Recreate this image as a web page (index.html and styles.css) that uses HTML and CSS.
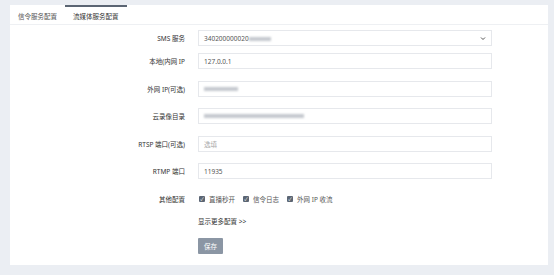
FILE: index.html
```html
<!DOCTYPE html>
<html lang="zh">
<head>
    <meta charset="UTF-8">
    <title>流媒体服务配置</title>
    <link rel="stylesheet" href="styles.css">
</head>
<body>
    <div class="card">
        <div class="tabs">
            <div class="tab">信令服务配置</div>
            <div class="tab active">流媒体服务配置</div>
        </div>
        <div class="form">
            <div class="row first">
                <label class="label">SMS 服务</label>
                <div class="control select">
                    <span>340200000020<span class="blur short"></span></span>
                    <svg class="arrow" width="6" height="5" viewBox="0 0 6 5"><path d="M1 1.5 L3 3.5 L5 1.5" fill="none" stroke="#555" stroke-width="1"/></svg>
                </div>
            </div>
            <div class="row second">
                <label class="label">本地(内网 IP</label>
                <div class="control">127.0.0.1</div>
            </div>
            <div class="row">
                <label class="label">外网 IP(可选)</label>
                <div class="control"><span class="blur mid"></span></div>
            </div>
            <div class="row">
                <label class="label">云录像目录</label>
                <div class="control"><span class="blur long"></span></div>
            </div>
            <div class="row">
                <label class="label">RTSP 端口(可选)</label>
                <div class="control placeholder">选填</div>
            </div>
            <div class="row">
                <label class="label">RTMP 端口</label>
                <div class="control">11935</div>
            </div>
            <div class="row">
                <label class="label">其他配置</label>
                <div class="checks">
                    <span class="check"><span class="box">✓</span>直播秒开</span>
                    <span class="check"><span class="box">✓</span>信令日志</span>
                    <span class="check"><span class="box">✓</span>外网 IP 收流</span>
                </div>
            </div>
            <div class="row more">
                <span class="label"></span>
                <a class="more-link">显示更多配置 &gt;&gt;</a>
            </div>
            <div class="row last">
                <span class="label"></span>
                <button class="save">保存</button>
            </div>
        </div>
    </div>
</body>
</html>
```

FILE: styles.css
```css
/* Página */
body {
    margin: 0;
    background-color: #ebeef3;
    font-family: "Noto Sans", "Noto Sans CJK SC", sans-serif;
    font-size: 6.5px;
    color: #333;
}

.card {
    margin: 5px 6px 0 10px;
    height: 260px;
    background-color: white;
}

/* Pestañas */
.tabs {
    display: flex;
    height: 20px;
    border-bottom: 1px solid #eef0f3;
    box-sizing: border-box;
}

.tab {
    display: flex;
    align-items: center;
    padding: 0 8px;
    color: #555;
    border-top: 2px solid transparent;
    box-sizing: border-box;
}

.tab.active {
    border-top-color: #5b6573;
    color: #333;
}

/* Formulario */
.row {
    display: flex;
    align-items: center;
    height: 16px;
    margin-top: 11.5px;
}

.row.first {
    margin-top: 5px;
}

.row.second {
    margin-top: 7px;
}

.row.more {
    margin-top: 6px;
}

.row.last {
    margin-top: 9.5px;
}

.label {
    width: 175px;
    margin-right: 13px;
    text-align: right;
    flex-shrink: 0;
}

.control {
    width: 294px;
    height: 16px;
    box-sizing: border-box;
    border: 1px solid #e6e8ec;
    padding: 0 5px;
    display: flex;
    align-items: center;
    color: #555;
}

.select {
    justify-content: space-between;
}

.placeholder {
    color: #aaa;
}

.blur {
    display: inline-block;
    height: 4px;
    background-color: #c5c9cf;
    filter: blur(1.2px);
    vertical-align: middle;
}

.blur.short { width: 22px; }
.blur.mid { width: 34px; }
.blur.long { width: 100px; }

/* Casillas */
.checks {
    display: flex;
    gap: 8px;
    padding-left: 1px;
}

.check {
    display: flex;
    align-items: center;
    color: #555;
}

.box {
    width: 6px;
    height: 6px;
    background-color: #5b6573;
    color: white;
    font-size: 5px;
    line-height: 6px;
    text-align: center;
    border-radius: 1px;
    margin-right: 4px;
}

.more-link {
    color: #333;
}

.save {
    width: 25px;
    height: 16px;
    border: none;
    border-radius: 1px;
    background-color: #8b96a4;
    color: white;
    font-family: inherit;
    font-size: 6.5px;
    padding: 0;
}
```
